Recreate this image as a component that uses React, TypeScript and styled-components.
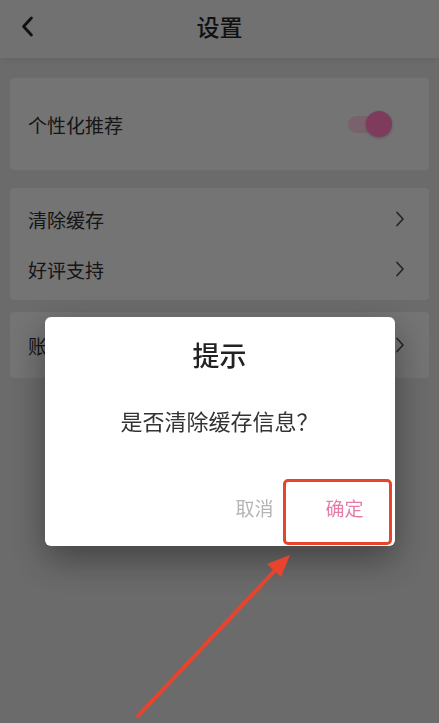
import React from "react";
import styled, { createGlobalStyle } from "styled-components";

const Global = createGlobalStyle`
  html, body { margin: 0; padding: 0; }
  body {
    background: #d7d7d7;
    font-family: "Noto Sans CJK SC", "Noto Sans", sans-serif;
    -webkit-font-smoothing: antialiased;
  }
  * { box-sizing: border-box; }
`;

const Page = styled.div`
  position: relative;
  width: 100%;
  min-height: 100vh;
  background: #d7d7d7;
  overflow: hidden;
`;

const Header = styled.header`
  height: 58px;
  padding-bottom: 6px;
  background: #e2e2e2;
  display: grid;
  grid-template-columns: 60px 1fr 60px;
  align-items: center;
  box-shadow: 0 3px 6px rgba(0, 0, 0, 0.06);
`;

const BackButton = styled.div`
  display: flex;
  align-items: center;
  padding-left: 21px;
  height: 100%;
`;

const Title = styled.h1`
  margin: 0;
  text-align: center;
  font-size: 23px;
  font-weight: 500;
  color: #222;
  line-height: 1;
`;

const Main = styled.main`
  display: flex;
  flex-direction: column;
  padding: 20px 10px 0 10px;
`;

const Card = styled.section<{ $pad?: number; $mt?: number }>`
  background: #e8e8e8;
  border-radius: 4px;
  padding: ${(p) => p.$pad ?? 0}px 0;
  margin-top: ${(p) => p.$mt ?? 0}px;
`;

const Row = styled.div<{ $h?: number }>`
  height: ${(p) => p.$h ?? 50}px;
  display: flex;
  align-items: center;
  justify-content: space-between;
  padding: 0 24px 0 18px;
`;

const Label = styled.span`
  font-size: 19px;
  color: #2c2c2c;
  line-height: 1;
`;

const Toggle = styled.div`
  position: relative;
  width: 38px;
  height: 17px;
  margin-right: 19px;
  border-radius: 9px;
  background: #f5c4d9;
`;

const Knob = styled.div`
  position: absolute;
  right: -6px;
  top: 50%;
  width: 26px;
  height: 26px;
  margin-top: -13px;
  border-radius: 50%;
  background: #ff76b6;
  box-shadow: 0 1px 3px rgba(0, 0, 0, 0.25);
`;

const Overlay = styled.div`
  position: fixed;
  inset: 0;
  background: rgba(0, 0, 0, 0.5);
  display: flex;
  justify-content: center;
  align-items: flex-start;
  padding-top: 317px;
`;

const Dialog = styled.div`
  position: relative;
  width: 350px;
  height: 229px;
  background: #fff;
  border-radius: 6px;
  display: flex;
  flex-direction: column;
  align-items: center;
  padding-top: 19px;
  box-shadow: 0 14px 36px rgba(0, 0, 0, 0.38);
`;

const DialogTitle = styled.div`
  font-size: 27px;
  font-weight: 500;
  line-height: 38px;
  color: #222;
`;

const Message = styled.div`
  margin-top: 31px;
  font-size: 22px;
  line-height: 31px;
  color: #333;
`;

const Actions = styled.div`
  margin-top: auto;
  align-self: stretch;
  display: flex;
  justify-content: flex-end;
  padding: 0 5px 9px 0;
`;

const ActionButton = styled.div<{ $primary?: boolean }>`
  width: 90px;
  height: 60px;
  display: flex;
  align-items: center;
  justify-content: center;
  font-size: 19px;
  color: ${(p) => (p.$primary ? "#e47ea9" : "#b5b5b5")};
`;

const Highlight = styled.div`
  position: absolute;
  left: 238px;
  top: 162px;
  width: 109px;
  height: 66px;
  border: 3px solid #e8432d;
  border-radius: 5px;
`;

const Annotation = styled.svg`
  position: absolute;
  left: 0;
  top: 0;
  width: 439px;
  height: 723px;
  pointer-events: none;
`;

const Chevron = ({ left = false, color = "#505050", w = 10, h = 16, sw = 1.8 }) => (
  <svg width={w} height={h} viewBox="0 0 10 16" fill="none">
    <path
      d={left ? "M8 1.5 L2 8 L8 14.5" : "M2 1.5 L8 8 L2 14.5"}
      stroke={color}
      strokeWidth={sw}
      strokeLinecap="round"
      strokeLinejoin="round"
    />
  </svg>
);

export default function App() {
  return (
    <>
      <Global />
      <Page>
        <Header>
          <BackButton>
            <Chevron left color="#222" w={13} h={21} sw={2.2} />
          </BackButton>
          <Title>设置</Title>
          <div />
        </Header>
        <Main>
          <Card>
            <Row $h={92}>
              <Label>个性化推荐</Label>
              <Toggle>
                <Knob />
              </Toggle>
            </Row>
          </Card>
          <Card $pad={6} $mt={18}>
            <Row>
              <Label>清除缓存</Label>
              <Chevron />
            </Row>
            <Row>
              <Label>好评支持</Label>
              <Chevron />
            </Row>
          </Card>
          <Card $pad={8} $mt={12}>
            <Row>
              <Label>账号管理</Label>
              <Chevron />
            </Row>
          </Card>
        </Main>
        <Overlay>
          <Dialog>
            <DialogTitle>提示</DialogTitle>
            <Message>是否清除缓存信息？</Message>
            <Actions>
              <ActionButton>取消</ActionButton>
              <ActionButton $primary>确定</ActionButton>
            </Actions>
            <Highlight />
          </Dialog>
          <Annotation viewBox="0 0 439 723">
            <line x1="138" y1="716" x2="282" y2="563" stroke="#e8432d" strokeWidth="4" strokeLinecap="round" />
            <polygon points="290,555 267,564 281,577" fill="#e8432d" />
          </Annotation>
        </Overlay>
      </Page>
    </>
  );
}
